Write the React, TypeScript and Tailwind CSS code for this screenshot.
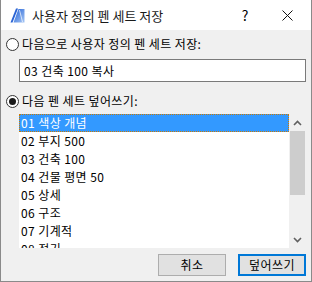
const FONT = "font-['Noto_Sans_CJK_KR','Noto_Sans',sans-serif]";

const penSets = [
  "01 색상 개념",
  "02 부지 500",
  "03 건축 100",
  "04 건물 평면 50",
  "05 상세",
  "06 구조",
  "07 기계적",
  "08 전기",
];

function Radio({ checked }: { checked?: boolean }) {
  return (
    <span className="flex h-[13px] w-[13px] shrink-0 items-center justify-center rounded-full border border-[#333] bg-white">
      {checked ? <span className="h-[7px] w-[7px] rounded-full bg-[#1a1a1a]" /> : null}
    </span>
  );
}

function AppIcon() {
  return (
    <svg width="15" height="15" viewBox="0 0 15 15">
      <defs>
        <linearGradient id="ai" x1="0" y1="0" x2="1" y2="1">
          <stop offset="0" stopColor="#1f5fd6" />
          <stop offset="1" stopColor="#a8c8f5" />
        </linearGradient>
      </defs>
      <path d="M0.5 14.5 L6 0.5 L8 0.5 L2.5 14.5 Z" fill="#2a63d4" />
      <path d="M3.5 14.5 L8.5 1 L14.5 1 L14.5 14.5 Z" fill="url(#ai)" />
      <path d="M9.5 2 L12.5 14" stroke="#ffffff" strokeWidth="1" opacity="0.7" />
    </svg>
  );
}

function Chevron({ down }: { down?: boolean }) {
  return (
    <svg width="9" height="6" viewBox="0 0 9 6" className={down ? "rotate-180" : ""}>
      <path d="M1 5 L4.5 1.5 L8 5" fill="none" stroke="#606060" strokeWidth="1.6" />
    </svg>
  );
}

export default function App() {
  return (
    <div className={`flex h-[282px] w-[312px] flex-col border-x border-b border-[#8a8a8a] text-[12px] tracking-[0.4px] text-black ${FONT}`}>
      <div className="flex h-[30px] shrink-0 items-center bg-white tracking-normal">
        <span className="ml-[9px] mt-[1px] flex">
          <AppIcon />
        </span>
        <span className="ml-[7px] text-[13px] leading-none text-[#1a1a1a]">사용자 정의 펜 세트 저장</span>
        <span className="ml-auto w-[20px] text-center text-[14px] leading-none">?</span>
        <svg width="11" height="11" viewBox="0 0 11 11" className="ml-[27px] mr-[18px]">
          <path d="M0.5 0.5 L10.5 10.5 M10.5 0.5 L0.5 10.5" stroke="#111" strokeWidth="1" />
        </svg>
      </div>

      <div className="flex flex-1 flex-col bg-[#f0f0f0] pl-[5px] pr-[5px]">
        <label className="mt-[7px] flex h-[14px] items-center gap-[3px]">
          <Radio />
          <span className="leading-none">다음으로 사용자 정의 펜 세트 저장:</span>
        </label>

        <div className="ml-[13px] mt-[8px] flex h-[23px] items-center border border-[#7a7a7a] bg-white pl-[4px]">
          <span className="leading-none">03 건축 100 복사</span>
        </div>

        <label className="mt-[12px] flex h-[14px] items-center gap-[3px]">
          <Radio checked />
          <span className="leading-none">다음 펜 세트 덮어쓰기:</span>
        </label>

        <div className="ml-[13px] mt-[5px] flex h-[135px] border-t border-[#f0f0f0] bg-white">
          <ul className="flex-1 overflow-hidden">
            {penSets.map((name, i) => (
              <li
                key={name}
                className={
                  i === 0
                    ? "flex h-[18px] items-center border border-dotted border-[#cc7a00] bg-[#3399ff] pl-[1px] text-white"
                    : "flex h-[18px] items-center pl-[2px]"
                }
              >
                <span className="leading-none">{name}</span>
              </li>
            ))}
          </ul>
          <div className="flex w-[17px] flex-col bg-[#f0f0f0]">
            <div className="flex h-[17px] items-center justify-center">
              <Chevron />
            </div>
            <div className="mx-[1px] h-[64px] bg-[#cdcdcd]" />
            <div className="flex-1" />
            <div className="flex h-[17px] items-center justify-center">
              <Chevron down />
            </div>
          </div>
        </div>

        <div className="mt-[6px] flex justify-end gap-[12px]">
          <button className="h-[22px] w-[68px] border border-[#adadad] bg-[#e1e1e1] leading-none">취소</button>
          <button className="h-[22px] w-[68px] border-2 border-[#0078d7] bg-[#e1e1e1] leading-none">덮어쓰기</button>
        </div>
      </div>
    </div>
  );
}
